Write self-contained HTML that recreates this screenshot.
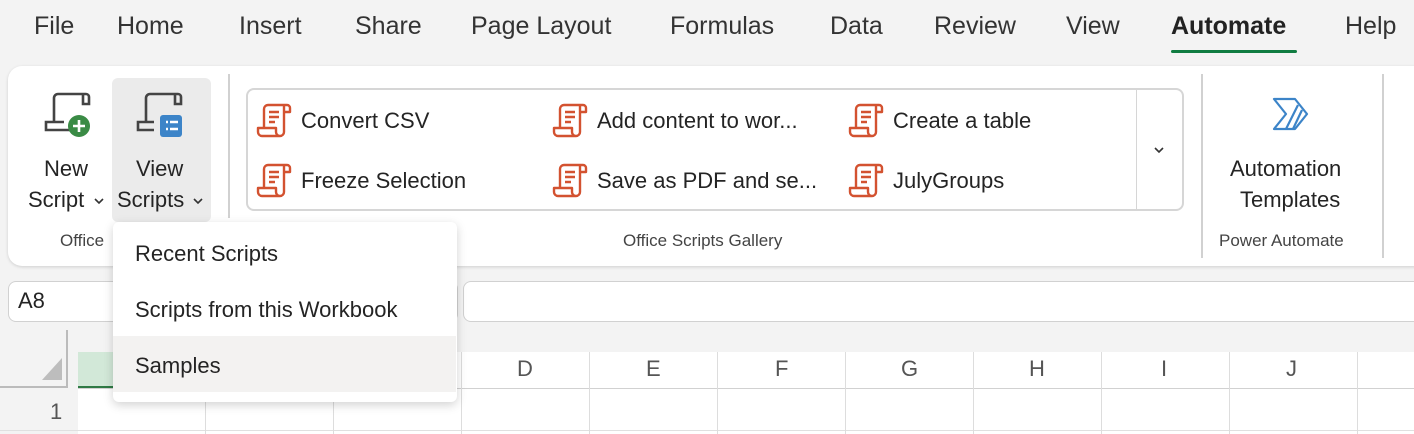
<!DOCTYPE html>
<html><head><meta charset="utf-8"><style>
*{margin:0;padding:0;box-sizing:border-box}
body{width:1414px;height:434px;background:#f3f3f3;font-family:"Liberation Sans",sans-serif;color:#242424;position:relative;overflow:hidden}
.a{position:absolute;white-space:nowrap}
.tab{top:12px;font-size:25px;color:#333}
.ribbon{left:8px;top:66px;width:1420px;height:200px;background:#fff;border-radius:14px;box-shadow:0 1px 3px rgba(0,0,0,.15)}
.t22{font-size:22px;color:#242424}
.g{font-size:17px;color:#444}
.sep{width:2px;background:#d1d1d1}
.col{font-size:22px;color:#555;top:356px}
</style></head><body>
<div class="a tab" style="left:34px">File</div>
<div class="a tab" style="left:117px">Home</div>
<div class="a tab" style="left:239px">Insert</div>
<div class="a tab" style="left:355px">Share</div>
<div class="a tab" style="left:471px">Page Layout</div>
<div class="a tab" style="left:670px">Formulas</div>
<div class="a tab" style="left:830px">Data</div>
<div class="a tab" style="left:934px">Review</div>
<div class="a tab" style="left:1066px">View</div>
<div class="a tab" style="left:1171px;font-weight:bold;color:#222">Automate</div>
<div class="a" style="left:1171px;top:50px;width:126px;height:3px;background:#107c41;border-radius:2px"></div>
<div class="a tab" style="left:1345px">Help</div>

<div class="a ribbon"></div>
<svg class="a" style="left:44px;top:92px" width="52" height="48" viewBox="0 0 52 48" fill="none" stroke="#444" stroke-width="2.6"><path d="M10 30V6a4 4 0 0 1 4-4h28a3 3 0 0 1 3 3v7h-6V3M2 34v-4h18M2 34v4h28"/><circle cx="35" cy="34" r="11" fill="#3a8b45" stroke="none"/><path d="M35 28v12M29 34h12" stroke="#fff"/></svg>
<div class="a t22" style="left:44px;top:156px">New</div>
<div class="a t22" style="left:28px;top:187px">Script</div>
<svg class="a" style="left:93px;top:197px" width="12" height="8"><path d="M2 2l4 4 4-4" fill="none" stroke="#333" stroke-width="1.6"/></svg>
<div class="a" style="left:112px;top:78px;width:99px;height:144px;background:#ebebeb;border-radius:6px"></div>
<svg class="a" style="left:136px;top:92px" width="52" height="48" viewBox="0 0 52 48" fill="none" stroke="#444" stroke-width="2.6"><path d="M10 30V6a4 4 0 0 1 4-4h28a3 3 0 0 1 3 3v7h-6V3M2 34v-4h16M2 34v4h16"/><rect x="24" y="23" width="22" height="22" rx="3" fill="#3c84c8" stroke="none"/><path d="M30 30h2M30 37h2M34 30h8M34 37h8" stroke="#fff" stroke-width="2.4"/></svg>
<div class="a t22" style="left:136px;top:156px">View</div>
<div class="a t22" style="left:117px;top:187px">Scripts</div>
<svg class="a" style="left:192px;top:197px" width="12" height="8"><path d="M2 2l4 4 4-4" fill="none" stroke="#333" stroke-width="1.6"/></svg>
<div class="a g" style="left:60px;top:231px">Office</div>
<div class="a sep" style="left:228px;top:74px;height:144px"></div>

<div class="a" style="left:246px;top:88px;width:938px;height:123px;border:2px solid #d6d6d6;border-radius:8px"></div>
<div class="a" style="left:1136px;top:89px;width:1px;height:121px;background:#d6d6d6"></div>
<svg class="a" style="left:1153px;top:146px" width="12" height="8"><path d="M2 2l4 4 4-4" fill="none" stroke="#333" stroke-width="1.6"/></svg>

<svg width="0" height="0" style="position:absolute"><defs><g id="sc" fill="none" stroke="#d35230" stroke-width="2.4" stroke-linejoin="round"><path d="M8 26V7a4 4 0 0 1 4-4h19a3 3 0 0 1 3 3v4h-6M28 3v27a4 4 0 0 1-4 4H6a4 4 0 0 1-4-4v-4h18v4a4 4 0 0 0 4 4"/><path d="M13 10h10M13 15h10M13 20h6"/></g></defs></svg>
<svg class="a" style="left:256px;top:102px" width="36" height="36"><use href="#sc"/></svg>
<svg class="a" style="left:256px;top:162px" width="36" height="36"><use href="#sc"/></svg>
<svg class="a" style="left:552px;top:102px" width="36" height="36"><use href="#sc"/></svg>
<svg class="a" style="left:552px;top:162px" width="36" height="36"><use href="#sc"/></svg>
<svg class="a" style="left:848px;top:102px" width="36" height="36"><use href="#sc"/></svg>
<svg class="a" style="left:848px;top:162px" width="36" height="36"><use href="#sc"/></svg>
<div class="a t22" style="left:301px;top:108px">Convert CSV</div>
<div class="a t22" style="left:301px;top:168px">Freeze Selection</div>
<div class="a t22" style="left:597px;top:108px">Add content to wor...</div>
<div class="a t22" style="left:597px;top:168px">Save as PDF and se...</div>
<div class="a t22" style="left:893px;top:108px">Create a table</div>
<div class="a t22" style="left:893px;top:168px">JulyGroups</div>
<div class="a g" style="left:623px;top:231px">Office Scripts Gallery</div>
<div class="a sep" style="left:1201px;top:74px;height:184px"></div>
<svg class="a" style="left:1272px;top:96px" width="40" height="36" viewBox="0 0 40 36" fill="none" stroke="#3c84c8" stroke-width="2.2" stroke-linejoin="round"><path d="M2 3h21l12 15-12 15H2l12-15z"/><path d="M26 9L14 33M30 14l-9 19"/></svg>
<div class="a t22" style="left:1230px;top:156px">Automation</div>
<div class="a t22" style="left:1240px;top:187px">Templates</div>
<div class="a g" style="left:1219px;top:231px">Power Automate</div>
<div class="a sep" style="left:1382px;top:74px;height:184px"></div>

<div class="a" style="left:8px;top:281px;width:450px;height:41px;background:#fff;border:1px solid #d1d1d1;border-radius:8px"></div>
<div class="a" style="left:18px;top:288px;font-size:22px">A8</div>
<div class="a" style="left:463px;top:281px;width:960px;height:41px;background:#fff;border:1px solid #d1d1d1;border-radius:8px"></div>

<div class="a" style="left:0;top:352px;width:1414px;height:82px;background:#fff"></div>
<div class="a" style="left:0;top:330px;width:78px;height:104px;background:#f3f3f3"></div>
<div class="a" style="left:66px;top:330px;width:2px;height:56px;background:#bbb"></div>
<div class="a" style="left:0;top:386px;width:68px;height:2px;background:#bbb"></div>
<svg class="a" style="left:40px;top:356px" width="24" height="26"><path d="M22 2V24H2z" fill="#bdbdbd"/></svg>
<div class="a" style="left:78px;top:352px;width:127px;height:36px;background:#d2e8d8"></div>
<div class="a" style="left:78px;top:386px;width:127px;height:3px;background:#2f7a45"></div>
<div class="a" style="left:78px;top:388px;width:1336px;height:1px;background:#d1d1d1"></div>
<div class="a" style="left:0;top:430px;width:1414px;height:1px;background:#e0e0e0"></div>
<div class="a" style="left:205px;top:352px;width:1px;height:82px;background:#ddd"></div>
<div class="a" style="left:333px;top:352px;width:1px;height:82px;background:#ddd"></div>
<div class="a" style="left:461px;top:352px;width:1px;height:82px;background:#ddd"></div>
<div class="a" style="left:589px;top:352px;width:1px;height:82px;background:#ddd"></div>
<div class="a" style="left:717px;top:352px;width:1px;height:82px;background:#ddd"></div>
<div class="a" style="left:845px;top:352px;width:1px;height:82px;background:#ddd"></div>
<div class="a" style="left:973px;top:352px;width:1px;height:82px;background:#ddd"></div>
<div class="a" style="left:1101px;top:352px;width:1px;height:82px;background:#ddd"></div>
<div class="a" style="left:1229px;top:352px;width:1px;height:82px;background:#ddd"></div>
<div class="a" style="left:1357px;top:352px;width:1px;height:82px;background:#ddd"></div>
<div class="a col" style="left:517px">D</div>
<div class="a col" style="left:646px">E</div>
<div class="a col" style="left:775px">F</div>
<div class="a col" style="left:901px">G</div>
<div class="a col" style="left:1029px">H</div>
<div class="a col" style="left:1161px">I</div>
<div class="a col" style="left:1286px">J</div>
<div class="a" style="left:50px;top:399px;font-size:22px;color:#555">1</div>

<div class="a" style="left:113px;top:222px;width:344px;height:180px;background:#fff;border-radius:6px;box-shadow:0 3px 10px rgba(0,0,0,.18)"></div>
<div class="a" style="left:113px;top:336px;width:343px;height:56px;background:#f3f2f1"></div>
<div class="a t22" style="left:135px;top:241px">Recent Scripts</div>
<div class="a t22" style="left:135px;top:297px">Scripts from this Workbook</div>
<div class="a t22" style="left:135px;top:353px">Samples</div>
</body></html>
